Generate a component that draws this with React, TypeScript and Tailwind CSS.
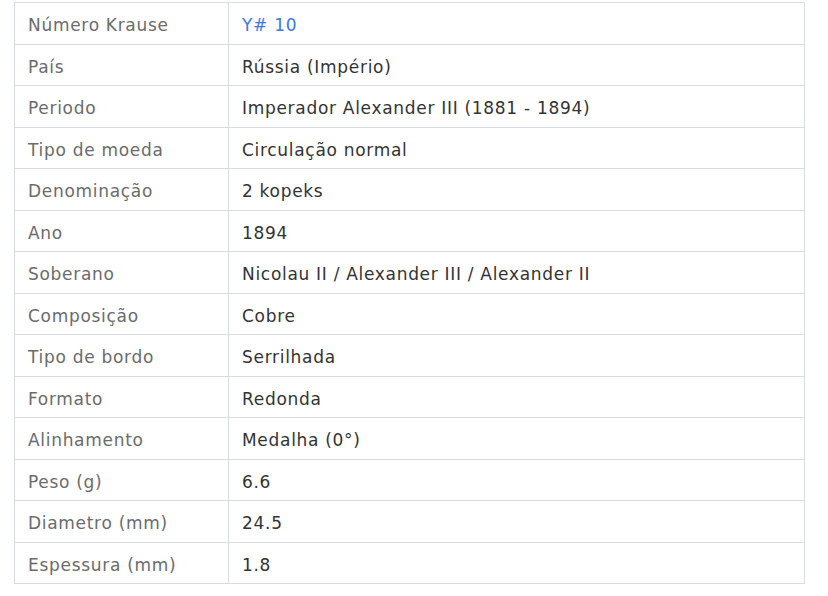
const rows: { label: string; value: string; link?: boolean }[] = [
  { label: "Número Krause", value: "Y# 10", link: true },
  { label: "País", value: "Rússia (Império)" },
  { label: "Periodo", value: "Imperador Alexander III (1881 - 1894)" },
  { label: "Tipo de moeda", value: "Circulação normal" },
  { label: "Denominação", value: "2 kopeks" },
  { label: "Ano", value: "1894" },
  { label: "Soberano", value: "Nicolau II / Alexander III / Alexander II" },
  { label: "Composição", value: "Cobre" },
  { label: "Tipo de bordo", value: "Serrilhada" },
  { label: "Formato", value: "Redonda" },
  { label: "Alinhamento", value: "Medalha (0°)" },
  { label: "Peso (g)", value: "6.6" },
  { label: "Diametro (mm)", value: "24.5" },
  { label: "Espessura (mm)", value: "1.8" }
];

export default function App() {
  return (
    <div className="w-[828px] h-[596px] bg-white pt-[2px] pl-[14px] font-['DejaVu_Sans']">
      <table className="w-[791px] border-collapse text-[17px] tracking-[0.7px]">
        <tbody>
          {rows.map(row => (
            <tr key={row.label} className="h-[41.5px]">
              <td className="w-[214px] border-[1.5px] border-[#d6dce3] px-[13px] pt-[5px] text-[#6b6b6b] align-middle">
                {row.label}
              </td>
              <td className="border-[1.5px] border-[#d6dce3] px-[13px] pt-[5px] align-middle">
                {row.link ? (
                  <a href="#" className="text-[#3e78e0]">
                    {row.value}
                  </a>
                ) : (
                  <span className="text-[#333333]">{row.value}</span>
                )}
              </td>
            </tr>
          ))}
        </tbody>
      </table>
    </div>
  );
}
